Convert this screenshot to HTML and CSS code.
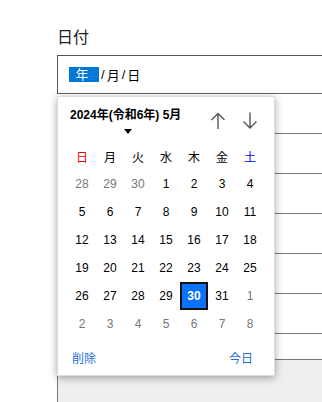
FILE: index.html
```html
<!DOCTYPE html>
<html lang="ja">
<head>
    <meta charset="UTF-8">
    <link rel="stylesheet" href="styles.css">
</head>
<body>
    <div class="pagina">
        <div class="rotulo">日付</div>
        <div class="entrada">
            <span class="seg-ano">年</span><span class="sep">/</span>月<span class="sep">/</span>日
        </div>
        <div class="linha"></div>
        <div class="linha"></div>
        <div class="linha"></div>
        <div class="linha"></div>
        <div class="linha"></div>
        <div class="linha"></div>
        <div class="linha curta"></div>
        <div class="botaoCinza"></div>

        <div class="calendario">
            <div class="cabecalho">
                <div class="mes">
                    <span>2024年(令和6年) 5月</span>
                    <span class="triangulo"></span>
                </div>
                <div class="setas">
                    <svg width="16" height="18" viewBox="0 0 16 18"><path d="M8 1.5V17M1.5 8L8 1.5L14.5 8" fill="none" stroke="#555" stroke-width="1.4"/></svg>
                    <svg width="16" height="18" viewBox="0 0 16 18"><path d="M8 0.5V16M1.5 9.5L8 16L14.5 9.5" fill="none" stroke="#555" stroke-width="1.4"/></svg>
                </div>
            </div>
            <div class="grade semana">
                <div class="dom">日</div><div>月</div><div>火</div><div>水</div><div>木</div><div>金</div><div class="sab">土</div>
            </div>
            <div class="grade dias" id="dias"></div>
            <div class="rodape">
                <span>削除</span>
                <span>今日</span>
            </div>
        </div>
    </div>

    <script>
        var dias = [
            [28, 1], [29, 1], [30, 1], [1, 0], [2, 0], [3, 0], [4, 0],
            [5, 0], [6, 0], [7, 0], [8, 0], [9, 0], [10, 0], [11, 0],
            [12, 0], [13, 0], [14, 0], [15, 0], [16, 0], [17, 0], [18, 0],
            [19, 0], [20, 0], [21, 0], [22, 0], [23, 0], [24, 0], [25, 0],
            [26, 0], [27, 0], [28, 0], [29, 0], [30, 2], [31, 0], [1, 1],
            [2, 1], [3, 1], [4, 1], [5, 1], [6, 1], [7, 1], [8, 1]
        ];
        var html = '';
        for (var i = 0; i < dias.length; i++) {
            var classe = '';
            if (dias[i][1] === 1) classe = 'fora';
            if (dias[i][1] === 2) classe = 'selecionado';
            html += '<div class="' + classe + '">' + dias[i][0] + '</div>';
        }
        document.getElementById('dias').innerHTML = html;
    </script>
</body>
</html>
```

FILE: styles.css
```css
body {
    margin: 0;
    font-family: "Liberation Sans", Arial, "Noto Sans CJK JP", sans-serif;
    background-color: #fff;
    color: #000;
    overflow: hidden;
}

.pagina {
    position: relative;
    padding: 28px 0 0 57px;
    width: 265px;
    overflow: hidden;
}

.rotulo {
    font-size: 16px;
    line-height: 20px;
    margin-bottom: 7px;
    color: #222;
}

.entrada {
    height: 39px;
    border: 1px solid #555;
    border-right: none;
    border-bottom-color: #666;
    box-sizing: border-box;
    padding-left: 11px;
    display: flex;
    align-items: center;
    font-size: 13px;
}

.seg-ano {
    background-color: #0078d7;
    color: #fff;
    width: 30px;
    height: 15px;
    line-height: 15px;
    text-align: center;
    text-indent: -4px;
}

.sep {
    margin: 0 2px;
}

.linha {
    height: 39px;
    border-bottom: 1px solid #777;
}

.linha.curta {
    height: 25px;
}

.botaoCinza {
    height: 42px;
    background-color: #efefef;
    border-left: 1px solid #777;
    border-bottom: 1px solid #777;
}

.calendario {
    position: absolute;
    left: 57px;
    top: 96px;
    width: 218px;
    height: 280px;
    box-sizing: border-box;
    background-color: #fff;
    border: 1px solid #ddd;
    box-shadow: 0 2px 8px rgba(0, 0, 0, 0.35);
    padding: 0 0 0 10px;
}

.cabecalho {
    height: 45px;
    display: flex;
    justify-content: space-between;
}

.mes {
    padding: 11px 0 0 2px;
    font-size: 12px;
    font-weight: bold;
    line-height: 14px;
    display: flex;
    flex-direction: column;
}

.triangulo {
    width: 0;
    height: 0;
    border-left: 4px solid transparent;
    border-right: 4px solid transparent;
    border-top: 5px solid #000;
    margin: 7px 0 0 54px;
}

.setas {
    display: flex;
    gap: 16px;
    padding: 15px 16px 0 0;
}

.setas svg {
    display: block;
}

.grade {
    display: grid;
    grid-template-columns: repeat(7, 28px);
    grid-auto-rows: 28px;
    font-size: 12px;
}

.grade div {
    display: flex;
    align-items: center;
    justify-content: center;
}

.semana .dom {
    color: #e00;
}

.semana .sab {
    color: #00e;
}

.dias .fora {
    color: #777;
}

.dias .selecionado {
    background-color: #0a72ff;
    color: #fff;
    font-weight: bold;
    border: 2px solid #111;
    box-sizing: border-box;
}

.rodape {
    display: flex;
    justify-content: space-between;
    padding: 11px 21px 0 4px;
    font-size: 12px;
    color: #1a6fd8;
}
```
